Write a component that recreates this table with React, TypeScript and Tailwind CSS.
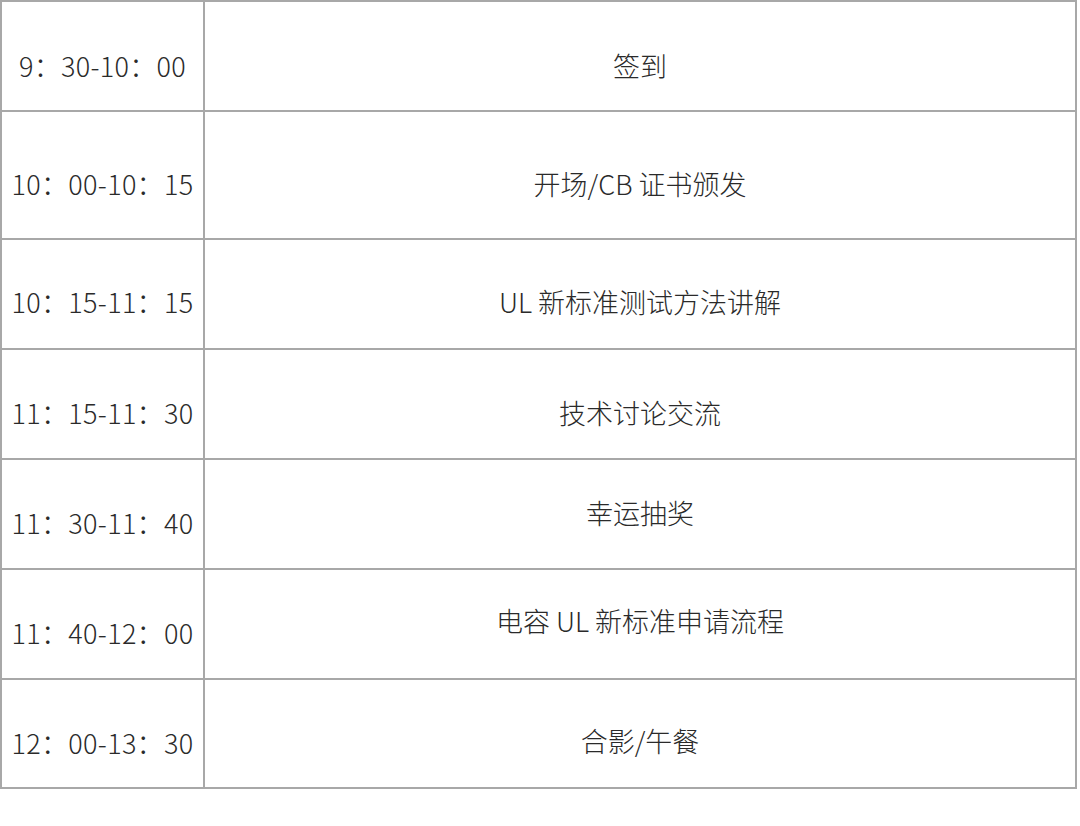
import React from "react";

type Row = { time: string; content: string; h: string; tp: string; cp: string };

const rows: Row[] = [
  { time: "9：30-10：00", content: "签到", h: "h-[110px]", tp: "pt-[49px]", cp: "pt-[49px]" },
  { time: "10：00-10：15", content: "开场/CB 证书颁发", h: "h-[128px]", tp: "pt-[57px]", cp: "pt-[57px]" },
  { time: "10：15-11：15", content: "UL 新标准测试方法讲解", h: "h-[110px]", tp: "pt-[47px]", cp: "pt-[47px]" },
  { time: "11：15-11：30", content: "技术讨论交流", h: "h-[110px]", tp: "pt-[48px]", cp: "pt-[48px]" },
  { time: "11：30-11：40", content: "幸运抽奖", h: "h-[110px]", tp: "pt-[48px]", cp: "pt-[38px]" },
  { time: "11：40-12：00", content: "电容 UL 新标准申请流程", h: "h-[110px]", tp: "pt-[48px]", cp: "pt-[36px]" },
  { time: "12：00-13：30", content: "合影/午餐", h: "h-[109px]", tp: "pt-[48px]", cp: "pt-[46px]" },
];

export default function App() {
  return (
    <div
      className="w-[1080px] h-[826px] bg-white text-[#2a2a2a]"
      style={{ fontFamily: '"Noto Sans CJK SC", "Noto Sans", sans-serif' }}
    >
      <div className="w-[1077px] border-l-2 border-t-2 border-[#a8a8a8]">
        {rows.map((r) => (
          <div key={r.time} className={`flex border-b-2 border-[#a8a8a8] ${r.h}`}>
            <div
              className={`w-[203px] shrink-0 border-r-2 border-[#a8a8a8] text-center text-[27px] font-light tracking-[0.3px] leading-[30px] ${r.tp}`}
            >
              {r.time}
            </div>
            <div
              className={`flex-1 border-r-2 border-[#a8a8a8] text-center text-[27px] font-light leading-[30px] ${r.cp}`}
            >
              {r.content}
            </div>
          </div>
        ))}
      </div>
    </div>
  );
}
